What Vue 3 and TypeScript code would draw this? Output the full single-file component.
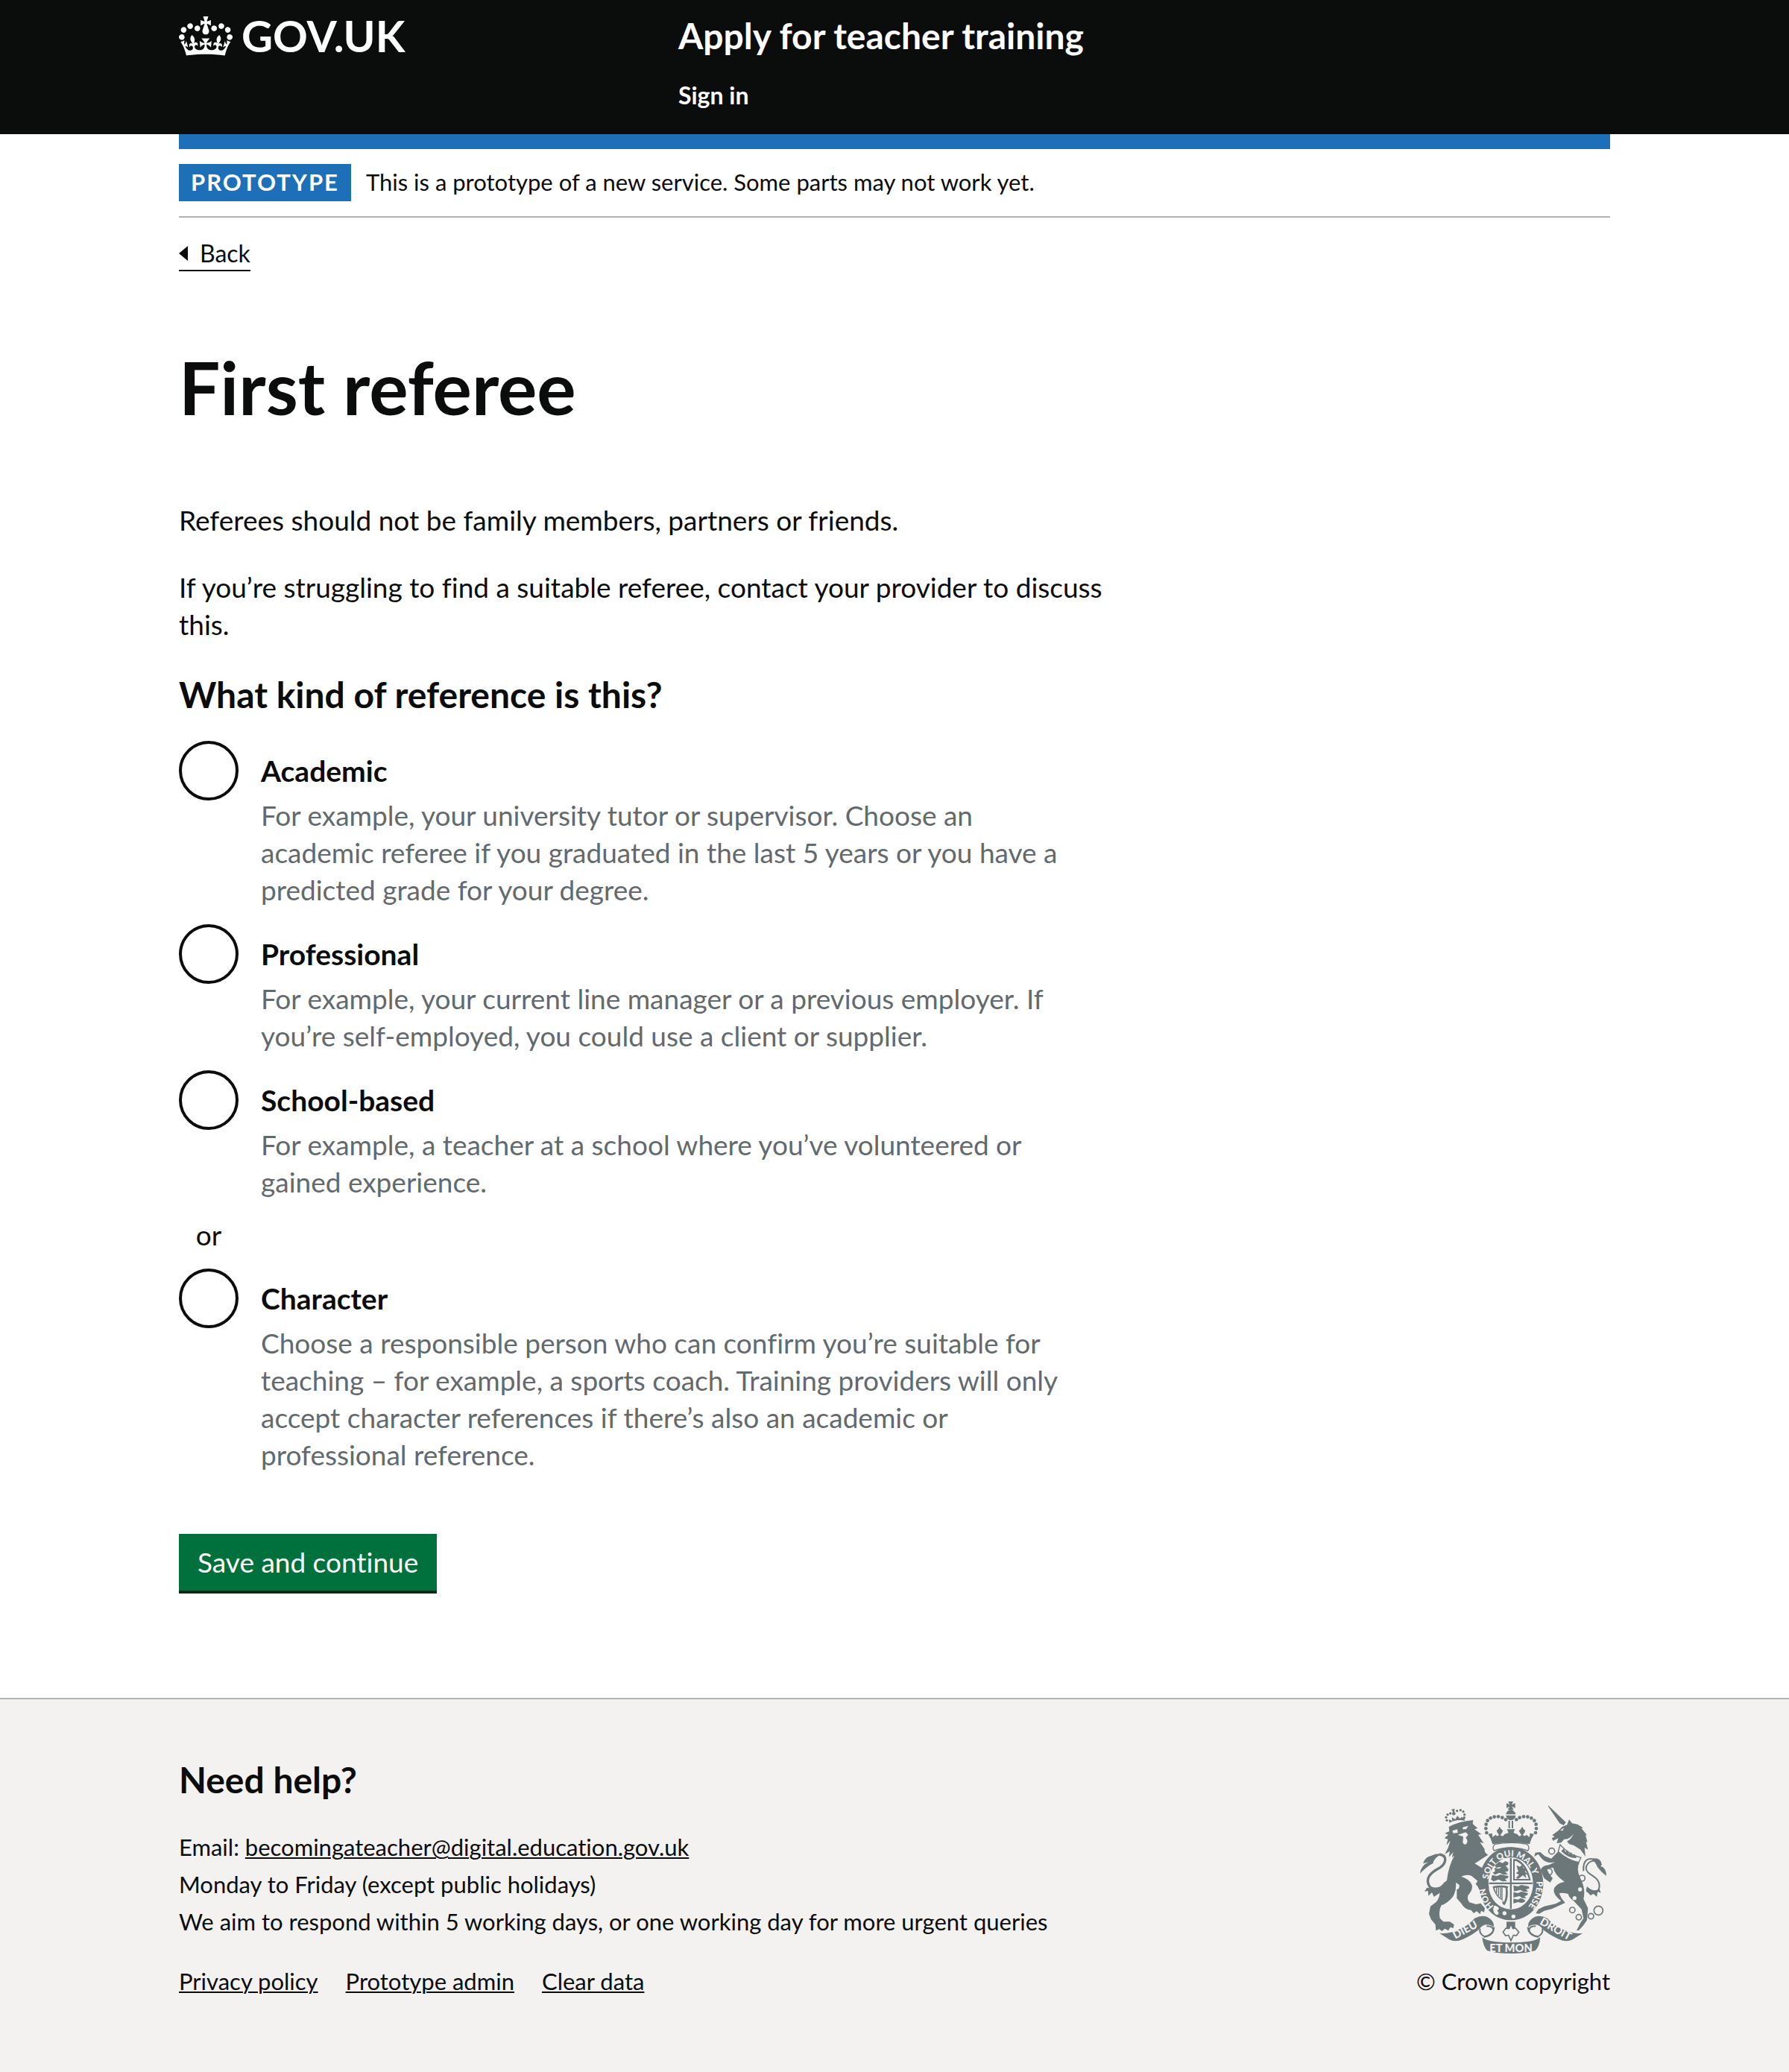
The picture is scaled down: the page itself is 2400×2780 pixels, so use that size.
<script setup lang="ts">
import { ref } from 'vue'

interface Option {
  value: string
  label: string
  hint: string
  divider?: boolean
}

const options: Option[] = [
  {
    value: 'academic',
    label: 'Academic',
    hint: 'For example, your university tutor or supervisor. Choose an academic referee if you graduated in the last 5 years or you have a predicted grade for your degree.',
  },
  {
    value: 'professional',
    label: 'Professional',
    hint: 'For example, your current line manager or a previous employer. If you’re self-employed, you could use a client or supplier.',
  },
  {
    value: 'school-based',
    label: 'School-based',
    hint: 'For example, a teacher at a school where you’ve volunteered or gained experience.',
  },
  {
    value: 'character',
    label: 'Character',
    hint: 'Choose a responsible person who can confirm you’re suitable for teaching – for example, a sports coach. Training providers will only accept character references if there’s also an academic or professional reference.',
    divider: true,
  },
]

const footerLinks = ['Privacy policy', 'Prototype admin', 'Clear data']
const kind = ref('')

// Pearls along the two arches of the royal crown
const pearls: [number, number][] = [
  [340, 204], [337, 187], [338, 170], [344, 155], [356, 145], [371, 140], [387, 139], [403, 143], [417, 151],
  [537, 204], [540, 187], [539, 170], [532, 155], [520, 145], [505, 140], [489, 139], [473, 143], [460, 151],
]
</script>

<template>
  <div class="page">
    <header class="header">
      <div class="container header-row">
        <div class="header-logo">
          <a class="logo-link" href="#">
            <svg class="crown" viewBox="0 0 132 97" aria-hidden="true">
              <path fill="currentColor" fill-rule="evenodd" d="M25 30.2c3.5 1.5 7.7-.2 9.1-3.7 1.5-3.6-.2-7.8-3.9-9.2-3.6-1.4-7.6.3-9.1 3.9-1.4 3.5.3 7.5 3.9 9zM9 39.5c3.6 1.5 7.8-.2 9.2-3.7 1.5-3.6-.2-7.8-3.9-9.1-3.6-1.5-7.6.2-9.1 3.8-1.4 3.5.3 7.5 3.8 9zM4.4 57.2c3.5 1.5 7.7-.2 9.1-3.8 1.5-3.6-.2-7.7-3.9-9.1-3.5-1.5-7.6.3-9.1 3.8-1.4 3.5.3 7.6 3.9 9.1zm38.3-21.4c3.5 1.5 7.7-.2 9.1-3.8 1.5-3.6-.2-7.7-3.9-9.1-3.6-1.5-7.6.3-9.1 3.8-1.3 3.6.4 7.7 3.9 9.1zm64.4-5.6c-3.6 1.5-7.8-.2-9.1-3.7-1.5-3.6.2-7.8 3.8-9.2 3.6-1.4 7.7.3 9.2 3.9 1.3 3.5-.4 7.5-3.9 9zm15.9 9.3c-3.6 1.5-7.7-.2-9.1-3.7-1.5-3.6.2-7.8 3.7-9.1 3.6-1.5 7.7.2 9.2 3.8 1.5 3.5-.3 7.5-3.8 9zm4.7 17.7c-3.6 1.5-7.8-.2-9.2-3.8-1.5-3.6.2-7.7 3.9-9.1 3.6-1.5 7.7.3 9.2 3.8 1.3 3.5-.4 7.6-3.9 9.1zM89.3 35.8c-3.6 1.5-7.8-.2-9.2-3.8-1.4-3.6.2-7.7 3.9-9.1 3.6-1.5 7.7.3 9.2 3.8 1.4 3.6-.3 7.7-3.9 9.1zM69.7 17.7l8.9 4.7V9.3l-8.9 2.8c-.2-.3-.5-.6-.9-.9L72.4 0H59.6l3.5 11.2c-.3.3-.6.5-.9.9l-8.8-2.8v13.1l8.8-4.7c.3.3.6.7.9.9l-5 15.4v.1c-.2.8-.4 1.6-.4 2.4 0 4.1 3.1 7.5 7 8.1h.2c.3 0 .7.1 1 .1.4 0 .7 0 1-.1h.2c4-.6 7.1-4.1 7.1-8.1 0-.8-.1-1.7-.4-2.4V34l-5.1-15.4c.4-.2.7-.6 1-.9zM66 92.8c16.9 0 32.8 1.1 47.1 3.2 4-16.9 8.9-26.7 14-33.5l-9.6-3.4c1 4.9 1.1 7.2 0 10.2-1.5-1.4-3-4.3-4.2-8.7L108.6 76c2.8-2 5-3.2 7.5-3.3-4.4 9.4-10 11.9-13.6 11.2-4.3-.8-6.3-4.6-5.6-7.9 1-4.7 5.7-5.9 8-.5 4.3-8.7-3-11.4-7.6-8.8 7.1-7.2 7.9-13.5 2.1-21.1-8 6.1-8.1 12.3-4.5 20.8-4.7-5.4-12.1-2.5-9.5 6.2 3.4-5.2 7.9-2 7.2 3.1-.6 4.3-6.4 7.8-13.5 7.2-10.3-.9-10.9-8-11.2-13.8 2.5-.5 7.1 1.8 11 7.3L80.2 60c-4.1 4.4-8 5.3-12.3 5.4 1.4-4.4 8-11.6 8-11.6H55.5s6.4 7.2 7.9 11.6c-4.2-.1-8-1-12.3-5.4l1.4 16.4c3.9-5.5 8.5-7.7 10.9-7.3-.3 5.8-.9 12.8-11.1 13.8-7.2.6-12.9-2.9-13.5-7.2-.7-5 3.8-8.3 7.1-3.1 2.7-8.7-4.6-11.6-9.4-6.2 3.7-8.5 3.6-14.7-4.6-20.8-5.8 7.6-5 13.9 2.2 21.1-4.7-2.6-11.9.1-7.7 8.8 2.3-5.5 7.1-4.2 8.1.5.7 3.3-1.3 7.1-5.7 7.9-3.5.7-9-1.8-13.5-11.2 2.5.1 4.7 1.3 7.5 3.3l-4.7-15.4c-1.2 4.4-2.7 7.2-4.3 8.7-1.1-3-.9-5.3 0-10.2l-9.5 3.4c5 6.9 9.9 16.7 14 33.5 14.8-2.1 30.8-3.2 47.7-3.2z" />
            </svg>
            <span class="logo-text">GOV.UK</span>
          </a>
        </div>
        <div class="header-content">
          <a class="service-name" href="#">Apply for teacher training</a>
          <nav><a class="nav-link" href="#">Sign in</a></nav>
        </div>
      </div>
    </header>

    <div class="container">
      <div class="blue-bar"></div>
      <div class="phase-banner">
        <strong class="tag">PROTOTYPE</strong>
        <span class="phase-text">This is a prototype of a new service. Some parts may not work yet.</span>
      </div>
      <a class="back-link" href="#">
        <svg class="back-arrow" viewBox="0 0 12 20" aria-hidden="true"><path d="M0 10L12 0V20Z" fill="currentColor" /></svg>
        <span>Back</span>
      </a>

      <main class="main">
        <h1>First referee</h1>
        <p>Referees should not be family members, partners or friends.</p>
        <p>If you’re struggling to find a suitable referee, contact your provider to discuss this.</p>

        <form @submit.prevent>
          <fieldset>
            <legend>What kind of reference is this?</legend>
            <template v-for="o in options" :key="o.value">
              <div v-if="o.divider" class="divider">or</div>
              <div class="radio-item">
                <input :id="o.value" v-model="kind" type="radio" name="kind" :value="o.value" :aria-describedby="o.value + '-hint'" />
                <label :for="o.value">{{ o.label }}</label>
                <div :id="o.value + '-hint'" class="hint">{{ o.hint }}</div>
              </div>
            </template>
          </fieldset>
          <button type="submit">Save and continue</button>
        </form>
      </main>
    </div>

    <footer class="footer">
      <div class="container footer-row">
        <div>
          <h2>Need help?</h2>
          <ul class="contact">
            <li>Email: <a href="mailto:becomingateacher@digital.education.gov.uk">becomingateacher@digital.education.gov.uk</a></li>
            <li>Monday to Friday (except public holidays)</li>
            <li>We aim to respond within 5 working days, or one working day for more urgent queries</li>
          </ul>
          <ul class="links">
            <li v-for="l in footerLinks" :key="l"><a href="#">{{ l }}</a></li>
          </ul>
        </div>
        <a class="copyright" href="#">
          <svg class="crest" viewBox="72 78 750 612" aria-hidden="true">
            <defs>
              <path id="garter-top" d="M347 392A93 113 0 0 1 530 392L534 420" />
              <path id="garter-left" d="M370 500Q336 466 334 420" />
              <path id="garter-right" d="M540 400Q546 460 490 522" />
            </defs>
            <g class="ink">
              <!-- royal crown -->
              <circle v-for="(p, i) in pearls" :key="i" :cx="p[0]" :cy="p[1]" r="7" />
              <path d="M427 78H447L441 91L455 85V105L442 98L449 112H425L432 98L420 105V85L433 91Z" />
              <path d="M437 110Q456 116 457 130H418Q419 116 437 110ZM418 134H457Q456 152 438 154Q420 152 418 134Z" />
              <path d="M428 156H434V186H428ZM441 156H447V186H441Z" />
              <path d="M346 209L362 206L364 222L376 212Q384 222 390 212Q383 206 380 196Q388 190 392 179Q397 190 406 196Q402 207 396 212Q404 224 412 210L428 204L422 190H454L448 204L464 210Q472 224 480 212Q474 207 470 196Q479 190 483 179Q488 190 496 196Q493 206 486 212Q493 222 500 212L513 222L514 206L531 209Q518 228 513 250Q438 236 364 250Q359 228 346 209Z" />
              <!-- garter -->
              <path fill-rule="evenodd" d="M438 262C512 262 568 328 568 408C568 490 514 556 438 556C362 556 310 490 310 408C310 328 364 262 438 262ZM438 303C386 303 347 350 347 408C347 466 386 512 438 512C490 512 527 466 527 408C527 350 490 303 438 303Z" />
              <path d="M434 305H441V404H525V411H441V510H434V411H350V404H434Z" />
              <!-- quarterings -->
              <path d="M390 320l14 6 12-8 12 6-2 10-10 3 10 9-14 2-18-6-14 3-8-8zM372 345l16 4 14-6 26 6-2 10-12 2 12 10-18 2-16-8-18 8-10-8 10-6zM362 374l20 4 14-6 32 6-2 8-12 4 8 8-18 2-16-8-20 8-10-8z" />
              <path d="M448 416l18 4 14-6 30 6 2 8-14 4 10 8-18 2-14-8-26 6zM448 443l18 4 14-6 26 6-2 8-12 4 8 8-16 0-12-8-24 6zM448 469l18 4 12-6 14 6 4 8-14 6-16-4-18 6z" />
              <path fill-rule="evenodd" d="M447 310H460Q502 326 518 396H447ZM453 318V390H510Q496 336 460 318Z" />
              <path d="M460 335l14 6 8-8 6 12 14 10-8 4 12 14-10-2 4 16-14-12-18 14-10-2 12-14-12-6 10-8-4-10z" />
              <path fill-rule="evenodd" d="M364 420Q396 412 428 420L424 428Q430 470 412 496Q398 488 406 478Q374 462 364 420ZM372 426Q378 456 400 470V424ZM404 424V474L410 484Q420 460 416 426Z" />
              <path d="M380 424V448M388 424V458M396 424V466" class="line thin" />
              <path d="M476 510Q500 496 520 462L496 514Z" />
              <!-- motto scrolls -->
              <path d="M150 608Q176 612 200 604Q262 584 292 548Q330 528 356 552Q372 566 368 584Q358 574 338 574Q322 576 312 590Q292 610 246 632Q214 646 190 634Z" />
              <path d="M727 608Q700 612 676 604Q614 584 584 548Q546 528 520 552Q504 566 508 584Q518 574 538 574Q554 576 564 590Q584 610 630 632Q662 646 686 634Z" />
              <path d="M322 624Q344 646 438 646Q534 646 556 624Q554 660 536 678Q500 690 438 690Q376 690 342 678Q326 660 322 624Z" />
              <path d="M370 584Q368 616 332 622Q308 610 314 590M506 584Q508 616 546 622Q570 610 564 590" class="line" />
              <path d="M340 580Q370 580 366 600Q360 618 330 624M538 580Q508 580 512 600Q518 618 548 624" class="line" />
              <path d="M420 562H455V588H420Z" />
              <!-- lion crown -->
              <path d="M190 164Q220 148 253 156L250 146L238 140L234 148L222 136L214 150L200 142L202 156L188 150Z" />
              <circle v-for="(p, i) in [[180,154],[177,142],[183,131],[194,126],[221,116],[235,113],[246,119],[251,131],[250,143]]" :key="'l' + i" :cx="p[0]" :cy="p[1]" r="5" />
              <path d="M198 110L212 107L210 118L216 128L208 134L200 130L204 119Z" />
              <!-- lion -->
              <path d="M188 180Q230 158 286 153L284 168L304 186L291 190L319 210L306 212L328 246L313 242L332 270Q330 284 346 293L322 308Q308 318 292 328L332 352Q346 372 346 402L350 428L338 426L334 440L322 432L312 436L304 420L296 410L304 398L280 378Q262 370 238 380Q270 390 280 412Q286 430 272 448Q256 462 270 484L298 492L316 488L333 508L330 524L318 518L314 532L300 520L288 528L278 516Q250 512 238 488L220 468V432Q232 430 230 414L216 404Q220 440 202 464Q182 488 158 496Q146 516 152 548L166 562L192 562L209 574L206 588L194 584L186 598L172 590L160 600L150 592L136 598L134 574L116 552L108 530L114 500L128 490Q150 476 152 442Q154 412 180 396Q186 340 210 296L200 304L206 282L188 302L192 278L172 290Q188 262 194 236L178 254L184 230L170 226L186 212L172 206L190 198Z" />
              <path d="M150 291C186 296 176 330 150 346C112 366 92 388 110 420C122 434 146 432 166 420" class="line thick" />
              <path d="M72 368Q76 336 106 322L84 328Q92 300 118 296Q140 286 158 290Q128 304 124 328Q104 336 72 368ZM100 425L90 440L104 438L106 458L120 444L128 462L158 442L170 408L140 430Z" />
              <!-- unicorn -->
              <path d="M588 94L659 162L650 174L634 166L588 98Z" />
              <path d="M604 214L630 194L644 180L664 172L672 151L684 166L706 170L728 184L722 186L744 214L738 214L746 242L740 240L748 272L734 264L738 300L718 272L690 254Q668 252 664 238Q680 232 690 208Q674 232 652 230L640 244L622 246L628 226L608 236L602 226L614 220Z" />
              <path d="M628 280Q668 316 714 322Q700 352 716 384Q740 430 730 470L748 508L744 556L730 576L712 596L702 598L718 566L730 548L722 512L690 478Q672 466 668 450Q644 444 632 448Q640 470 656 486L604 510L572 518L552 530L538 528L548 512L572 500L618 490L640 478Q600 448 614 424Q628 404 654 402Q612 372 608 344L582 350Q590 370 606 388L596 404L572 388L558 356Q560 336 590 334L616 322Q580 330 560 306L548 290L532 300L536 284L556 282L574 298L600 308Z" />
              <path d="M730 358C726 310 752 300 784 316C760 316 746 322 740 344C740 378 794 374 794 420C790 450 770 452 742 438" class="line" />
              <path d="M762 308Q800 300 804 334L798 338Q822 344 822 378Q800 362 786 342Q780 324 762 308ZM744 420Q770 446 794 430L800 446L786 440L784 462L770 450L758 456L740 436Z" />
              <path d="M636 252L628 280Q668 316 710 324L720 304Q672 294 636 252Z" class="line thin" />
              <path d="M650 268l8 14 6-8 8 16 8-8 6 14 8-6 8 16Q672 308 640 278Z" />
              <g class="line chain">
                <circle cx="602" cy="278" r="12" /><circle cx="591" cy="361" r="13" /><circle cx="724" cy="387" r="12" />
                <circle cx="685" cy="515" r="11" /><circle cx="711" cy="544" r="11" /><circle cx="760" cy="540" r="11" /><circle cx="790" cy="517" r="18" />
              </g>
            </g>
            <!-- light details -->
            <g class="paper">
              <path d="M374 250Q438 238 502 250Q514 258 506 272Q472 262 438 262Q404 262 370 272Q362 258 374 250Z" />
              <path d="M202 196L222 190L224 204L206 206ZM244 182L266 176L258 190L244 190ZM224 212L256 202L266 212L256 224Q268 236 258 250Q248 254 244 244L246 220Z" />
              <circle cx="412" cy="528" r="8" /><circle cx="448" cy="541" r="8" />
              <circle cx="716" cy="432" r="8" /><circle cx="694" cy="467" r="8" />
              <path d="M636 194L652 184L646 196Z" />
            </g>
            <path d="M374 250Q438 238 502 250Q516 262 506 276Q472 264 438 264Q404 264 370 276Q360 262 374 250Z" class="ink line thin" />
            <path d="M378 496Q366 490 364 512Q366 534 382 538Q398 530 386 518Q402 506 378 496Z" class="buckle" />
            <path d="M438 572L446 590L456 588L470 604L460 618L448 616L438 638L428 616L416 618L406 604L418 588L430 590Z" class="buckle" />
            <g class="motto">
              <text><textPath href="#garter-top">SOIT QUI MAL Y</textPath></text>
              <text><textPath href="#garter-right">PENSE</textPath></text>
              <text><textPath href="#garter-left">HON</textPath></text>
              <text class="scroll" transform="rotate(-28 214 632)" x="214" y="632">DIEU</text>
              <text class="scroll" transform="rotate(29 551 571)" x="551" y="571">DROIT</text>
              <text class="scroll" x="438" y="683" text-anchor="middle">ET MON</text>
            </g>
          </svg>
          <span>© Crown copyright</span>
        </a>
      </div>
    </footer>
  </div>
</template>

<style>
body {
  margin: 0;
  background: #fff;
}
</style>

<style scoped>
.page {
  display: flex;
  flex-direction: column;
  min-height: 100vh;
  color: #0b0c0c;
  font-family: Lato, "Liberation Sans", sans-serif;
  font-size: 37px;
  line-height: 50px;
  font-variant-ligatures: none;
}
.container {
  box-sizing: border-box;
  width: calc(100% - 60px);
  max-width: 1920px;
  margin: 0 auto;
}
a {
  color: inherit;
}
.header {
  background: #0b0c0c;
  color: #fff;
}
.header-row {
  display: flex;
  gap: 30px;
  padding: 20px 0 32px;
}
.header-logo {
  flex: 0 0 33.3333%;
}
.logo-link {
  display: inline-flex;
  align-items: center;
  gap: 12px;
  text-decoration: none;
}
.crown {
  width: 72px;
  height: 53px;
}
.logo-text {
  font-size: 58px;
  line-height: 56px;
  font-weight: 700;
}
.header-content {
  display: flex;
  flex-direction: column;
  align-items: flex-start;
  gap: 32px;
}
.service-name {
  font-size: 48px;
  line-height: 56px;
  font-weight: 700;
  text-decoration: none;
}
.nav-link {
  display: block;
  font-size: 32px;
  line-height: 40px;
  font-weight: 700;
  text-decoration: none;
}
.blue-bar {
  height: 20px;
  background: #1d70b8;
}
.phase-banner {
  display: flex;
  align-items: flex-start;
  gap: 20px;
  padding: 20px 0;
  border-bottom: 2px solid #b1b4b6;
  font-size: 31px;
  line-height: 48px;
}
.tag {
  padding: 0 16px 2px;
  background: #1d70b8;
  color: #fff;
  letter-spacing: 2px;
}
.back-link {
  display: inline-flex;
  align-items: center;
  gap: 16px;
  margin-top: 30px;
  padding-bottom: 4px;
  border-bottom: 2px solid #0b0c0c;
  font-size: 32px;
  line-height: 36px;
  text-decoration: none;
}
.back-arrow {
  width: 12px;
  height: 20px;
}
.main {
  width: calc(66.6667% - 20px);
  padding: 110px 0 144px;
}
h1 {
  margin: 0 0 109px;
  font-size: 98px;
  line-height: 90px;
}
p {
  margin: 0 0 40px;
}
fieldset {
  min-width: 0;
  margin: 0 0 81px;
  padding: 0;
  border: 0;
}
legend {
  margin-bottom: 33px;
  padding: 0;
  font-size: 48px;
  line-height: 58px;
  font-weight: 700;
}
.radio-item {
  display: grid;
  grid-template-columns: 80px 1fr;
  grid-template-rows: 75px auto;
  column-gap: 30px;
  padding-right: 60px;
}
.radio-item + .radio-item,
.divider {
  margin-top: 21px;
}
.divider {
  width: 80px;
  margin-bottom: 20px;
  text-align: center;
}
input[type='radio'] {
  appearance: none;
  box-sizing: border-box;
  grid-row: 1 / 3;
  width: 80px;
  height: 80px;
  margin: 0;
  border: 4px solid #0b0c0c;
  border-radius: 50%;
  background: #fff;
}
input[type='radio']:checked {
  box-shadow: inset 0 0 0 16px #fff, inset 0 0 0 40px #0b0c0c;
}
label {
  padding-top: 15px;
  font-size: 39px;
  font-weight: 700;
}
.hint {
  color: #626a6e;
}
button {
  display: block;
  height: 76px;
  padding: 0 25px;
  border: 0;
  background: #00703c;
  box-shadow: 0 4px 0 #002d18;
  color: #fff;
  font: inherit;
  font-variant-ligatures: none;
  cursor: pointer;
}
.footer {
  flex: 1;
  padding: 79px 0 102px;
  border-top: 2px solid #b1b4b6;
  background: #f3f2f1;
  font-size: 31px;
}
.footer-row {
  display: flex;
  justify-content: space-between;
  align-items: flex-end;
  gap: 30px;
}
h2 {
  margin: 0 0 36px;
  font-size: 48px;
  line-height: 58px;
}
ul {
  margin: 0;
  padding: 0;
  list-style: none;
}
.footer li a {
  text-decoration: underline;
  text-decoration-thickness: 2px;
  text-underline-offset: 2px;
}
.links {
  display: flex;
  gap: 37px;
  margin-top: 35px;
  line-height: 40px;
}
.copyright {
  display: flex;
  flex-direction: column;
  align-items: center;
  gap: 17px;
  line-height: 40px;
  text-decoration: none;
}
.crest {
  width: 250px;
  height: 204px;
}
.ink {
  fill: #6c777a;
}
.line {
  fill: none;
  stroke: #6c777a;
  stroke-width: 6;
}
.thin {
  stroke-width: 4;
}
.thick {
  stroke-width: 10;
}
.chain {
  stroke-width: 5;
}
.paper {
  fill: #f3f2f1;
}
.buckle {
  fill: #f3f2f1;
  stroke: #6c777a;
  stroke-width: 5;
}
.motto {
  fill: #f3f2f1;
  font-family: Lato, sans-serif;
  font-size: 35px;
  font-weight: 900;
}
.scroll {
  font-size: 44px;
}
</style>
